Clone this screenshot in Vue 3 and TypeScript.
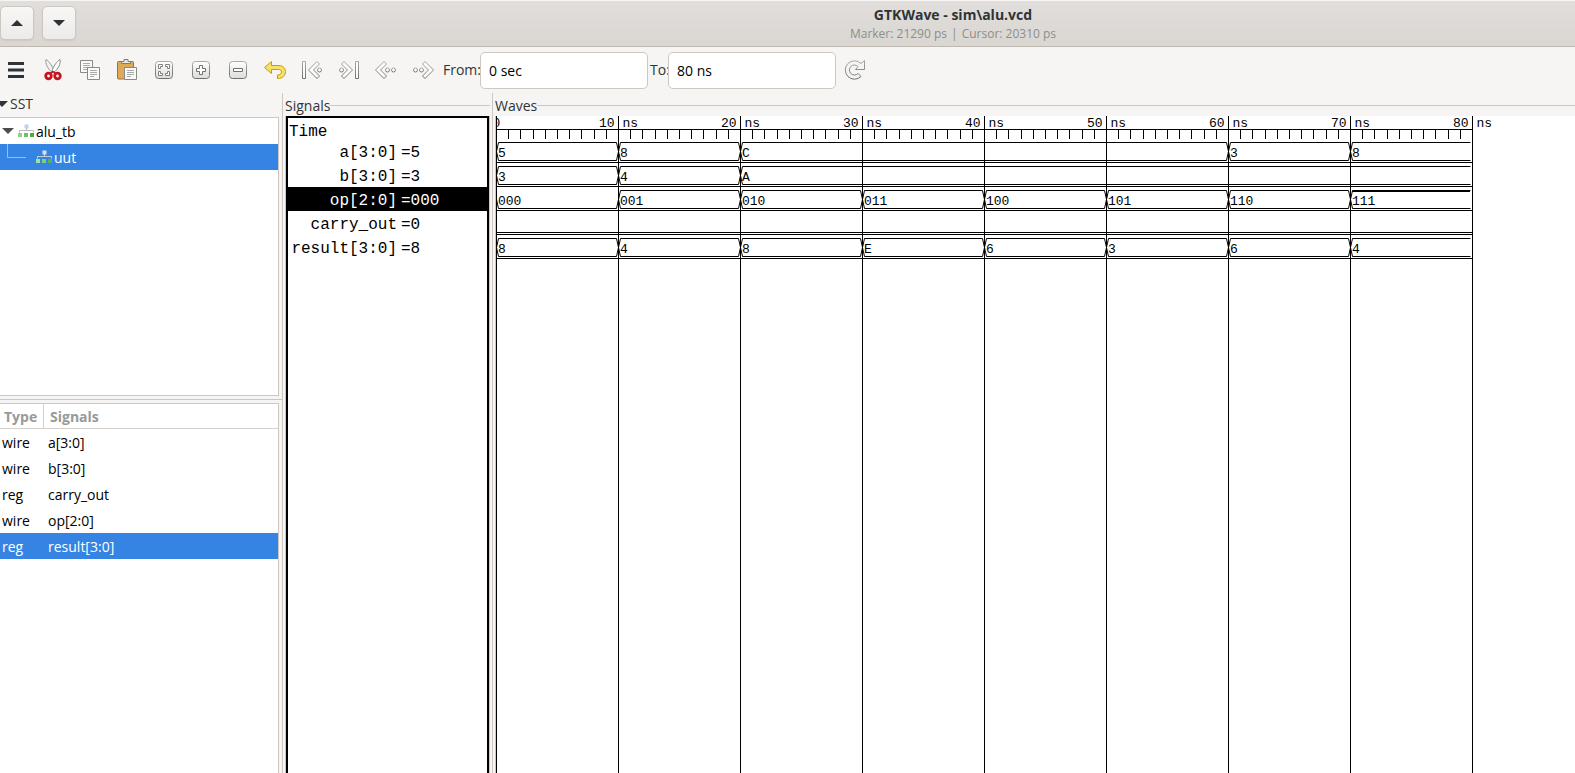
<script setup lang="ts">
import { ref } from 'vue'

interface Segment { from: number; to: number; value: string; level?: 'low' | 'high' }
interface Trace { name: string; value: string; kind: 'bus' | 'bit'; segments: Segment[] }

const STEP = 122
const END = 8 * STEP
const fromTime = ref('0 sec')
const toTime = ref('80 ns')
const selectedTrace = 'op[2:0]'
const selectedSignal = 'result[3:0]'

function steps(values: string[]): Segment[] {
  return values.map((value, i) => ({ from: i, to: i + 1, value }))
}

const opSegments = steps(['000', '001', '010', '011', '100', '101', '110', '111'])
opSegments[0].level = 'low'
opSegments[7].level = 'high'

const traces: Trace[] = [
  { name: 'a[3:0]', value: '5', kind: 'bus', segments: [
    { from: 0, to: 1, value: '5' }, { from: 1, to: 2, value: '8' }, { from: 2, to: 6, value: 'C' },
    { from: 6, to: 7, value: '3' }, { from: 7, to: 8, value: '8' } ] },
  { name: 'b[3:0]', value: '3', kind: 'bus', segments: [
    { from: 0, to: 1, value: '3' }, { from: 1, to: 2, value: '4' }, { from: 2, to: 8, value: 'A' } ] },
  { name: 'op[2:0]', value: '000', kind: 'bus', segments: opSegments },
  { name: 'carry_out', value: '0', kind: 'bit', segments: [] },
  { name: 'result[3:0]', value: '8', kind: 'bus', segments: steps(['8', '4', '8', 'E', '6', '3', '6', '4']) },
]

const signals = [
  { type: 'wire', name: 'a[3:0]' },
  { type: 'wire', name: 'b[3:0]' },
  { type: 'reg', name: 'carry_out' },
  { type: 'wire', name: 'op[2:0]' },
  { type: 'reg', name: 'result[3:0]' },
]

const majors = Array.from({ length: 9 }, (_, i) => ({ x: i * STEP + 0.5, label: i ? `${i * 10} ns` : '0' }))
const minors = Array.from({ length: 80 }, (_, i) => i).filter(i => i % 10).map(i => Math.round(i * STEP / 10) + 0.5)

function segmentPath(s: Segment): string {
  const a = s.from * STEP + 0.5
  const b = s.to * STEP + 0.5
  const edge = s.to === 8 ? `H${b - 2}` : `H${b - 2} L${b} 9.5`
  const upper = s.level === 'low' ? '' : `M${a} 9.5 L${a + 2} 0.5 ${edge}`
  return `${upper} M${a} 9.5 L${a + 2} 18.5 ${edge}`
}
</script>

<template>
  <div class="app">
    <header class="titlebar">
      <button class="win-btn" type="button" aria-label="Previous">
        <svg width="12" height="6" viewBox="0 0 12 6"><path d="M0 6 6 0l6 6z" fill="#2e3436" /></svg>
      </button>
      <button class="win-btn" type="button" aria-label="Next">
        <svg width="12" height="6" viewBox="0 0 12 6"><path d="M0 0 6 6l6-6z" fill="#2e3436" /></svg>
      </button>
      <div class="titles">
        <h1>GTKWave - sim\alu.vcd</h1>
        <p>Marker: 21290 ps<span class="bar">|</span>Cursor: 20310 ps</p>
      </div>
    </header>

    <svg class="defs" width="0" height="0" aria-hidden="true">
      <defs>
        <linearGradient id="plate" x1="0" y1="0" x2="0" y2="1"><stop offset="0" stop-color="#fff" /><stop offset="1" stop-color="#dcdcda" /></linearGradient>
        <linearGradient id="edge" x1="0" y1="0" x2="0" y2="1"><stop offset="0" stop-color="#a8a8a6" /><stop offset="1" stop-color="#70716e" /></linearGradient>
      </defs>
    </svg>

    <div class="toolbar" role="toolbar">
      <button class="tool first" type="button" aria-label="Menu">
        <svg width="24" height="24"><path d="M4 5.5h16M4 12h16M4 18.5h16" stroke="#2e3436" stroke-width="3" /></svg>
      </button>
      <button class="tool" type="button" aria-label="Cut">
        <svg width="24" height="24">
          <path d="M5 1.500c-1 4 1.500 9 6.500 13.500l1.500-2C12 9 8 3 5 1.500z" fill="#f2f2f0" stroke="#999b97" />
          <path d="M19 1.500c1 4-1.500 9-6.500 13.500l-1.500-2c1-4 5-10 8-11.500z" fill="#fff" stroke="#888a85" />
          <circle cx="7.500" cy="18" r="2.800" fill="#f6f5f4" stroke="#c4151c" stroke-width="2.800" />
          <circle cx="16.500" cy="18" r="2.800" fill="#f6f5f4" stroke="#c4151c" stroke-width="2.800" />
          <path d="M9.500 15 12 13.500l2.500 1.500" fill="none" stroke="#c4151c" stroke-width="1.500" />
        </svg>
      </button>
      <button class="tool" type="button" aria-label="Copy">
        <svg width="24" height="24">
          <path d="M2.500 2.500h12v12h-12z" fill="#fafafa" stroke="#888a85" />
          <path d="M5 5.500h7M5 7.500h7M5 9.500h7M5 11.500h4" stroke="#a9aba7" />
          <path d="M9.500 9.500h12v12h-12z" fill="#fafafa" stroke="#888a85" />
          <path d="M12 12.500h7M12 14.500h7M12 16.500h7M12 18.500h4" stroke="#a9aba7" />
        </svg>
      </button>
      <button class="tool" type="button" aria-label="Paste">
        <svg width="24" height="24">
          <rect x="2.500" y="3.500" width="16" height="17.500" rx="1" fill="#dfa95a" stroke="#a4702a" />
          <path d="M6.500 5.500v-2h2.500v-2h4v2h2.500v2z" fill="#e8e8e6" stroke="#7a7c78" />
          <path d="M9.500 9.500h12v12h-12z" fill="#fafafa" stroke="#888a85" />
          <path d="M12 12.500h7M12 14.500h7M12 16.500h7M12 18.500h4" stroke="#a9aba7" />
        </svg>
      </button>
      <button class="tool" type="button" aria-label="Zoom fit">
        <svg width="24" height="24">
          <rect x="3.500" y="3.500" width="17" height="17" rx="3" fill="url(#plate)" stroke="url(#edge)" />
          <path d="M6.500 6.500h4v2h-2v2h-2zM13.500 6.500h4v4h-2v-2h-2zM6.500 13.500h2v2h2v2h-4zM15.500 13.500h2v4h-4v-2h2z" fill="#fff" stroke="#80827e" />
        </svg>
      </button>
      <button class="tool" type="button" aria-label="Zoom in">
        <svg width="24" height="24">
          <rect x="3.500" y="3.500" width="17" height="17" rx="3" fill="url(#plate)" stroke="url(#edge)" />
          <path d="M10.500 7.500h3v3h3v3h-3v3h-3v-3h-3v-3h3z" fill="#fff" stroke="#70726e" />
        </svg>
      </button>
      <button class="tool" type="button" aria-label="Zoom out">
        <svg width="24" height="24">
          <rect x="3.500" y="3.500" width="17" height="17" rx="3" fill="url(#plate)" stroke="url(#edge)" />
          <path d="M7.500 10.500h9v3h-9z" fill="#fff" stroke="#70726e" />
        </svg>
      </button>
      <button class="tool" type="button" aria-label="Undo zoom">
        <svg width="24" height="24">
          <path d="M1.500 9.500 8.500 3.500v4H16c4 0 6.500 3 6.500 6 0 4-2.500 7-8 7v-3.500c2.500 0 4-1.500 4-3s-1-2.500-3-2.500h-7v4z" fill="#f5e169" stroke="#c4a000" stroke-linejoin="round" />
        </svg>
      </button>
      <button class="tool" type="button" aria-label="Zoom to start">
        <svg width="24" height="24" fill="#fcfcfb" stroke="url(#edge)">
          <path d="M2.500 3.500h3v17h-3z" />
          <path d="M17 3.500 8.500 12l8.500 8.500 2.500-2.500-6-6 6-6z" stroke-linejoin="round" />
          <circle cx="19.500" cy="12" r="2" />
        </svg>
      </button>
      <button class="tool" type="button" aria-label="Zoom to end">
        <svg width="24" height="24" fill="#fcfcfb" stroke="url(#edge)">
          <path d="M18.500 3.500h3v17h-3z" />
          <path d="M7 3.500l8.500 8.500L7 20.500 4.500 18l6-6-6-6z" stroke-linejoin="round" />
          <circle cx="4.500" cy="12" r="2" />
        </svg>
      </button>
      <button class="tool" type="button" aria-label="Previous edge">
        <svg width="24" height="24" fill="#fcfcfb" stroke="url(#edge)">
          <path d="M10 3.500 1.500 12l8.500 8.500 2.500-2.500-6-6 6-6z" stroke-linejoin="round" />
          <circle cx="13.500" cy="12" r="2" /><circle cx="19.500" cy="12" r="2" />
        </svg>
      </button>
      <button class="tool" type="button" aria-label="Next edge">
        <svg width="24" height="24" fill="#fcfcfb" stroke="url(#edge)">
          <path d="M14 3.500l8.500 8.500-8.500 8.500-2.500-2.500 6-6-6-6z" stroke-linejoin="round" />
          <circle cx="4.500" cy="12" r="2" /><circle cx="10.500" cy="12" r="2" />
        </svg>
      </button>
      <label for="from">From:</label>
      <input id="from" v-model="fromTime" type="text">
      <label for="to" class="to">To:</label>
      <input id="to" v-model="toTime" type="text">
      <button class="tool" type="button" aria-label="Reload">
        <svg width="24" height="24">
          <path d="M21.500 2.500v9h-9l2.500-3A5 5 0 1 0 15 15.500l3 3A9.200 9.200 0 1 1 18 5.500z" fill="#f4f4f2" stroke="url(#edge)" stroke-linejoin="round" />
        </svg>
      </button>
    </div>

    <main class="panes">
      <section class="sidebar">
        <h2 class="sst"><svg width="8" height="6" viewBox="0 0 8 6"><path d="M-4 0H8L2 6z" fill="#2e3436" /></svg>SST</h2>
        <ul class="tree">
          <li class="node">
            <svg class="arrow" width="12" height="6"><path d="M0 0h12L6 6z" fill="#4a4d4e" /></svg>
            <svg width="17" height="14" viewBox="0 0 17 14">
              <path d="M8.500 4v3M1.500 8.500v-2h14v2" fill="none" stroke="#b9bbb8" />
              <path d="M6.500 .5h4v4h-4z" fill="#b9d3f3" /><path d="M0 9h4v4H0z" fill="#8ed487" /><path d="M6 9h4v4H6z" fill="#6fc069" /><path d="M12 9h4v4h-4z" fill="#4fa651" />
            </svg>
            <span>alu_tb</span>
          </li>
          <li class="node child selected">
            <svg class="branch" width="19" height="26"><path d="M.5 0v13.500H19" fill="none" stroke="#92bff2" /></svg>
            <svg width="17" height="14" viewBox="0 0 17 14">
              <path d="M8.500 4v3M1.500 8.500v-2h14v2" fill="none" stroke="#c6cdd4" />
              <path d="M6.500 .5h4v4h-4z" fill="#cfe2fa" /><path d="M0 9h4v4H0z" fill="#a0e29a" /><path d="M6 9h4v4H6z" fill="#7fd07a" /><path d="M12 9h4v4h-4z" fill="#55b35a" />
            </svg>
            <span>uut</span>
          </li>
        </ul>
        <div class="divider"></div>
        <div class="list">
          <table>
            <thead><tr><th class="type" scope="col">Type</th><th scope="col">Signals</th></tr></thead>
            <tbody>
              <tr v-for="s in signals" :key="s.name" :class="{ selected: s.name === selectedSignal }">
                <td>{{ s.type }}</td><td>{{ s.name }}</td>
              </tr>
            </tbody>
          </table>
        </div>
      </section>

      <section class="frame signals">
        <h2>Signals</h2>
        <div class="frame-body">
          <div class="names">
            <div class="time">Time</div>
            <div v-for="t in traces" :key="t.name" class="trace" :class="{ active: t.name === selectedTrace }">
              <span class="name">{{ t.name }}</span><span>={{ t.value }}</span>
            </div>
          </div>
        </div>
      </section>

      <section class="frame waves">
        <h2>Waves</h2>
        <div class="frame-body">
          <svg class="canvas" width="100%" height="100%" role="img" aria-label="Waveforms">
            <g stroke="#000">
              <line v-for="m in majors" :key="m.x" :x1="m.x" :x2="m.x" y1="0" y2="100%" />
              <line v-for="x in minors" :key="x" :x1="x" :x2="x" y1="14" y2="23" />
              <line x1="0" :x2="END" y1="13.5" y2="13.5" />
            </g>
            <text v-for="m in majors" :key="m.label" :x="m.x" y="11" text-anchor="middle">{{ m.label }}</text>
            <g v-for="(t, i) in traces" :key="t.name" :transform="`translate(0 ${26 + i * 24})`">
              <path :d="`M0 20.5H${END}`" stroke="#000" />
              <path v-if="t.kind === 'bit'" :d="`M0 18.5H${END}`" stroke="#000" />
              <template v-for="s in t.segments" :key="s.from">
                <path :d="segmentPath(s)" fill="none" stroke="#000" />
                <path v-if="s.level === 'high'" :d="`M${s.from * STEP + 2} 1.5H${END - 2}`" stroke="#000" />
                <text :x="s.from * STEP + 2" y="15">{{ s.value }}</text>
              </template>
            </g>
          </svg>
        </div>
      </section>
    </main>
  </div>
</template>

<style>
body { margin: 0; }
</style>

<style scoped>
.app {
  display: flex;
  flex-direction: column;
  height: 100vh;
  overflow: hidden;
  background: #f6f5f4;
  color: #2e3436;
  font: 14px/20px "Open Sans", "Noto Sans", sans-serif;
}
h1, h2, p, ul { margin: 0; padding: 0; list-style: none; }
svg { flex: none; display: block; }
.defs { position: absolute; }
.titlebar {
  display: flex;
  align-items: center;
  gap: 8px;
  height: 43px;
  flex: none;
  padding-bottom: 2px;
  border-top: 1px solid #f6f5f4;
  border-bottom: 1px solid #bfb8b1;
  background: linear-gradient(#e1dedb, #dad6d2);
}
.win-btn {
  display: flex;
  align-items: center;
  justify-content: center;
  width: 34px;
  height: 34px;
  padding: 0;
  border: 1px solid #cdc7c2;
  border-radius: 5px;
  background: linear-gradient(#f8f7f6, #edebe9);
  box-shadow: 0 1px 2px rgba(0, 0, 0, 0.07);
}
.titles { flex: 1; margin-left: 247px; padding-top: 2px; text-align: center; }
.titles h1 { font-size: 14px; line-height: 20px; font-weight: 700; }
.titles p { font-size: 12px; line-height: 18px; color: #8b8e8a; }
.bar { margin: 0 4px; }
.toolbar { display: flex; align-items: center; height: 46px; flex: none; }
.tool {
  display: flex;
  align-items: center;
  justify-content: center;
  width: 37px;
  height: 36px;
  flex: none;
  padding: 0;
  border: 0;
  background: none;
}
.tool.first { width: 34px; padding-right: 2px; }
.toolbar label { width: 37px; flex: none; padding-left: 2px; }
.toolbar label.to { width: 18px; }
.toolbar input {
  box-sizing: border-box;
  width: 168px;
  height: 37px;
  padding: 0 8px;
  border: 1px solid #cdc7c2;
  border-radius: 5px;
  background: #fff;
  color: #000;
  font: inherit;
}
.panes { display: flex; flex: 1; min-height: 0; }
.sidebar {
  display: flex;
  flex-direction: column;
  width: 282px;
  flex: none;
  border-right: 1px solid #cdc7c2;
  color: #000;
}
h2 { font-size: 14px; line-height: 20px; font-weight: 400; color: #2e3436; }
.sst { display: flex; align-items: center; gap: 2px; height: 22px; padding-bottom: 2px; }
.tree {
  height: 277px;
  flex: none;
  margin-right: 3px;
  border: 1px solid #cdc7c2;
  border-left: 0;
  background: #fff;
}
.node { display: flex; align-items: center; height: 26px; gap: 1px; padding-left: 2px; }
.node span { padding-top: 2px; }
.node .arrow { margin-right: 3px; }
.node.child { padding-left: 7px; }
.node .branch { margin-right: 9px; }
.selected { background: #3584e4; color: #fff; }
.divider { height: 1px; flex: none; margin: 3px 0; background: #cdc7c2; }
.list { flex: 1; margin-right: 3px; border: 1px solid #cdc7c2; border-width: 1px 1px 0 0; background: #fff; }
table { width: 100%; border-collapse: separate; border-spacing: 0; }
th {
  height: 22px;
  padding: 2px 0 0 6px;
  border-bottom: 1px solid #d5d0cc;
  text-align: left;
  font-weight: 700;
  color: #989a98;
}
th.type { width: 39px; padding-left: 4px; border-right: 1px solid #d5d0cc; }
td { height: 24px; padding: 2px 0 0 4px; }
td:first-child { padding-left: 2px; }
.frame { display: flex; flex-direction: column; padding-left: 2px; }
.frame h2 { display: flex; align-items: center; height: 21px; padding-top: 2px; }
.frame h2::after { content: ""; flex: 1; height: 1px; background: #cdc7c2; }
.frame-body { flex: 1; min-height: 0; border-left: 1px solid #cdc7c2; }
.signals { width: 205px; flex: none; padding-right: 2px; border-right: 1px solid #cdc7c2; }
.signals .frame-body { border-right: 1px solid #cdc7c2; }
.names {
  box-sizing: border-box;
  height: 100%;
  border: 2px solid #000;
  border-width: 2px 2px 0;
  background: #fff;
  color: #000;
  font: 16px/28px "Liberation Mono", monospace;
}
.time { height: 21px; padding-left: 1px; }
.trace { display: grid; grid-template-columns: 109px 1fr; gap: 4px; height: 24px; }
.trace .name { text-align: right; }
.trace.active { background: #000; color: #fff; }
.waves { flex: 1; min-width: 0; }
.waves .frame-body { background: #fff; }
.canvas { overflow: hidden; font: 13px "Liberation Mono", monospace; }
</style>
